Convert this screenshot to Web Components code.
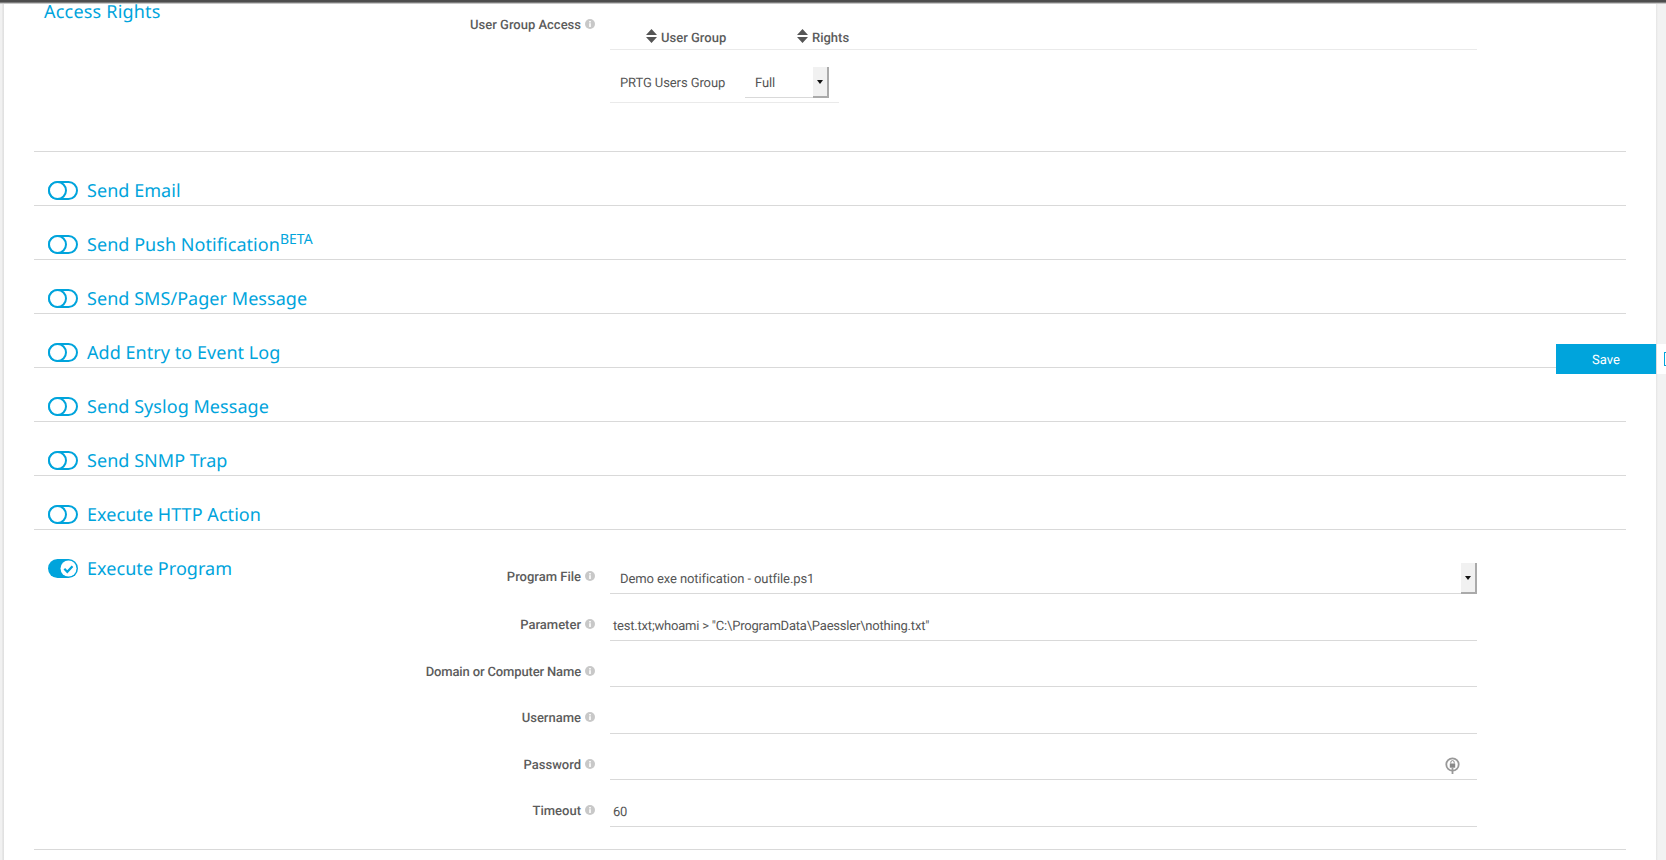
<!DOCTYPE html>
<html>
<head>
<meta charset="utf-8">
<title>Notification settings</title>
<style>
    html, body { margin: 0; height: 100%; background: #fff; overflow: hidden; }
</style>
</head>
<body>
<prtg-app>
    <prtg-section label="Access Rights" kind="plain" height="148">
        <prtg-field label="User Group Access" height="auto">
            <prtg-rights></prtg-rights>
        </prtg-field>
    </prtg-section>
    <prtg-section label="Send Email"></prtg-section>
    <prtg-section label="Send Push Notification" beta></prtg-section>
    <prtg-section label="Send SMS/Pager Message"></prtg-section>
    <prtg-section label="Add Entry to Event Log"></prtg-section>
    <prtg-section label="Send Syslog Message"></prtg-section>
    <prtg-section label="Send SNMP Trap"></prtg-section>
    <prtg-section label="Execute HTTP Action"></prtg-section>
    <prtg-section label="Execute Program" on>
        <prtg-field label="Program File" first><prtg-select value="Demo exe notification - outfile.ps1"></prtg-select></prtg-field>
        <prtg-field label="Parameter"><prtg-input value='test.txt;whoami &gt; "C:\ProgramData\Paessler\nothing.txt"'></prtg-input></prtg-field>
        <prtg-field label="Domain or Computer Name" tight><prtg-input></prtg-input></prtg-field>
        <prtg-field label="Username"><prtg-input></prtg-input></prtg-field>
        <prtg-field label="Password"><prtg-input secret></prtg-input></prtg-field>
        <prtg-field label="Timeout"><prtg-input value="60"></prtg-input></prtg-field>
    </prtg-section>
</prtg-app>

<script>
class PrtgApp extends HTMLElement {
    constructor() {
        super();
        this.attachShadow({ mode: "open" });
        this.shadowRoot.innerHTML = `
        <style>
            :host {
                display: flex;
                flex-direction: column;
                position: relative;
                height: 860px;
                overflow: hidden;
                font-family: Roboto, "Liberation Sans", sans-serif;
                text-rendering: geometricPrecision;
                color: #555;
            }
            .top {
                height: 4px;
                flex: none;
                background: linear-gradient(#4d4d4d 0, #4d4d4d 2px, #aaa 3px, #e4e4e4 4px);
            }
            .frame { display: flex; flex: 1; min-height: 0; }
            .left {
                width: 4px;
                flex: none;
                background: linear-gradient(90deg, #f1f1f1 0, #f1f1f1 2px, #ddd 3px, #e6e6e6 4px);
            }
            main { flex: 1; padding-left: 30px; padding-right: 30px; min-width: 0; }
            .right {
                width: 10px;
                flex: none;
                background: linear-gradient(90deg, #e4e4e4 0, #f2f2f2 2px);
            }
            /* floating save bar, stays over the content */
            .bar {
                position: absolute;
                left: 1556px;
                top: 344px;
                display: flex;
                height: 30px;
            }
            .save {
                width: 100px;
                background: #00a4dc;
                color: #fff;
                font-size: 13px;
                line-height: 33px;
                text-align: center;
            }
            .gap { width: 1px; background: #ddd; }
            .cancel {
                width: 9px;
                background: #fff;
                overflow: hidden;
                position: relative;
            }
            .cancel i {
                position: absolute;
                left: 7px;
                top: 8px;
                width: 8px;
                height: 12px;
                border: 1px solid #00a4dc;
            }
        </style>
        <div class="top"></div>
        <div class="frame">
            <div class="left"></div>
            <main><slot></slot></main>
            <div class="right"></div>
        </div>
        <div class="bar">
            <div class="save">Save</div>
            <div class="gap"></div>
            <div class="cancel"><i></i></div>
        </div>
        `;
    }
}

class PrtgSection extends HTMLElement {
    constructor() {
        super();
        this.attachShadow({ mode: "open" });
    }

    connectedCallback() {
        const label = this.getAttribute("label");
        const plain = this.getAttribute("kind") === "plain";
        const isOn = this.hasAttribute("on");
        const beta = this.hasAttribute("beta") ? "<sup>BETA</sup>" : "";
        const height = this.getAttribute("height");
        const toggle = plain ? "" : `<prtg-toggle ${isOn ? "on" : ""}></prtg-toggle>`;
        this.shadowRoot.innerHTML = `
        <style>
            :host {
                display: flex;
                box-sizing: border-box;
                border-bottom: 1px solid #d9d9d9;
                height: ${height ? height + "px" : "54px"};
            }
            :host([on]) { height: 320px; }
            .head {
                width: 340px;
                flex: none;
                box-sizing: border-box;
                display: flex;
                align-items: flex-start;
                gap: 9px;
                padding-left: 14px;
                padding-top: 27px;
                font: 18px/24px "Noto Sans", "Open Sans", sans-serif;
                letter-spacing: 0.05px;
                color: #00a4dc;
            }
            .head.plain {
                padding-left: 10px;
                padding-top: 0;
                line-height: 16px;
                letter-spacing: 0.2px;
            }
            prtg-toggle { margin-top: 2px; }
            sup { font-size: 14px; line-height: 0; vertical-align: 7px; }
            .body { flex: 1; padding-top: 17.75px; min-width: 0; }
            .plain + .body { padding-top: 0; }
        </style>
        <div class="head ${plain ? "plain" : ""}">${toggle}<span>${label}${beta}</span></div>
        <div class="body"><slot></slot></div>
        `;
    }
}

class PrtgToggle extends HTMLElement {
    constructor() {
        super();
        this.attachShadow({ mode: "open" });
    }

    connectedCallback() {
        const inner = this.hasAttribute("on")
            ? `<rect x="0" y="0" width="30" height="19" rx="9.5" fill="#00a4dc"/>
               <circle cx="20.5" cy="9.5" r="8" fill="#fff"/>
               <path d="M16.3 9.8l3 3 5.200-5.600" fill="none" stroke="#00a4dc" stroke-width="2.2"/>`
            : `<rect x="1" y="1" width="28" height="17" rx="8.5" fill="none" stroke="#00a4dc" stroke-width="2"/>
               <circle cx="9.5" cy="9.5" r="8.5" fill="#fff" stroke="#00a4dc" stroke-width="2"/>`;
        this.shadowRoot.innerHTML = `
        <style>
            :host { display: block; width: 30px; height: 19px; flex: none; }
            svg { display: block; }
        </style>
        <svg width="30" height="19" viewBox="0 0 30 19">${inner}</svg>
        `;
    }
}

class PrtgField extends HTMLElement {
    constructor() {
        super();
        this.attachShadow({ mode: "open" });
    }

    connectedCallback() {
        const auto = this.getAttribute("height") === "auto";
        const top = auto ? "14px" : this.hasAttribute("first") ? "22px" : "24px";
        this.shadowRoot.innerHTML = `
        <style>
            :host {
                display: flex;
                height: ${auto ? "auto" : "46.5px"};
                box-sizing: border-box;
                font-size: 13px;
            }
            .label {
                width: 221px;
                flex: none;
                box-sizing: border-box;
                display: flex;
                justify-content: flex-end;
                gap: 4px;
                padding-top: ${top};
                font-weight: 500;
                line-height: 16px;
                color: #5c5c5c;
                white-space: nowrap;
                letter-spacing: ${this.hasAttribute("tight") ? "-0.14px" : "0"};
            }
            svg { display: block; margin-top: 1px; flex: none; }
            .ctl { flex: none; width: 867px; margin-left: 15px; }
        </style>
        <div class="label"><span>${this.getAttribute("label")}</span>
            <svg width="10" height="10" viewBox="0 0 10 10">
                <circle cx="5" cy="5" r="5" fill="#c8c8c8"/>
                <rect x="4.2" y="4.2" width="1.6" height="3.8" fill="#fff"/>
                <rect x="4.2" y="2" width="1.6" height="1.5" fill="#fff"/>
            </svg>
        </div>
        <div class="ctl"><slot></slot></div>
        `;
    }
}

class PrtgInput extends HTMLElement {
    constructor() {
        super();
        this.attachShadow({ mode: "open" });
    }

    connectedCallback() {
        const lock = this.hasAttribute("secret") ? `
            <svg width="15" height="17" viewBox="0 0 15 17">
                <circle cx="7.500" cy="7.500" r="6.200" fill="none" stroke="#999" stroke-width="1.800"/>
                <rect x="4.800" y="6.500" width="5.400" height="4.200" fill="#888"/>
                <path d="M5.800 6.500V5.300a1.700 1.700 0 0 1 3.400 0V6.500" fill="none" stroke="#888" stroke-width="1"/>
                <rect x="6.600" y="10.500" width="1.800" height="6.500" fill="#999"/>
            </svg>` : "";
        this.shadowRoot.innerHTML = `
        <style>
            :host {
                display: flex;
                align-items: center;
                justify-content: space-between;
                box-sizing: border-box;
                height: 46.5px;
                padding: 18px 17px 0 3px;
                border-bottom: 1px solid #d9d9d9;
                font-size: 13px;
                letter-spacing: -0.2px;
                color: #555;
                white-space: nowrap;
            }
            svg { display: block; }
        </style>
        <span>${(this.getAttribute("value") || "").replace(/&/g, "&amp;").replace(/</g, "&lt;")}</span>${lock}
        `;
    }
}

class PrtgSelect extends HTMLElement {
    constructor() {
        super();
        this.attachShadow({ mode: "open" });
    }

    connectedCallback() {
        const compact = this.hasAttribute("compact");
        this.shadowRoot.innerHTML = `
        <style>
            :host {
                display: flex;
                align-items: stretch;
                box-sizing: border-box;
                height: ${compact ? "31px" : "46.5px"};
                padding-top: ${compact ? "0" : "15px"};
                font-size: 13px;
                letter-spacing: -0.1px;
                color: #555;
            }
            .val {
                flex: 1;
                border-bottom: 1px solid #d9d9d9;
                padding-left: 10px;
                line-height: ${compact ? "33px" : "34px"};
                white-space: nowrap;
            }
            .btn {
                width: 16px;
                box-sizing: border-box;
                background: #f1f1f1;
                border-right: 2px solid #aaa;
                border-bottom: 2px solid #aaa;
                display: flex;
                align-items: center;
                justify-content: center;
            }
            .btn i {
                width: 0;
                height: 0;
                border-left: 3.5px solid transparent;
                border-right: 3.5px solid transparent;
                border-top: 4px solid #111;
            }
        </style>
        <div class="val">${this.getAttribute("value")}</div>
        <div class="btn"><i></i></div>
        `;
    }
}

class PrtgSortHead extends HTMLElement {
    constructor() {
        super();
        this.attachShadow({ mode: "open" });
    }

    connectedCallback() {
        this.shadowRoot.innerHTML = `
        <style>
            :host {
                display: flex;
                align-items: center;
                gap: 4px;
                font-size: 13px;
                font-weight: 500;
                color: #5c5c5c;
                white-space: nowrap;
            }
            svg { display: block; margin-top: -5px; }
        </style>
        <svg width="11" height="14" viewBox="0 0 11 14">
            <path d="M5.500 0L11 6H0zM0 8h11l-5.500 6z" fill="#555"/>
        </svg>
        <span><slot></slot></span>
        `;
    }
}

class PrtgRights extends HTMLElement {
    constructor() {
        super();
        this.attachShadow({ mode: "open" });
        this.shadowRoot.innerHTML = `
        <style>
            :host { display: block; font-size: 13px; color: #555; }
            .head {
                display: flex;
                align-items: flex-end;
                height: 46px;
                box-sizing: border-box;
                padding: 0 0 3px 36px;
                border-bottom: 1px solid #eaeaea;
            }
            prtg-sort-head:first-child { width: 151px; }
            .row {
                display: flex;
                align-items: center;
                width: 229px;
                height: 53px;
                box-sizing: border-box;
                padding-left: 10px;
                border-bottom: 1px solid #eaeaea;
            }
            .name {
                width: 125px;
                flex: none;
                white-space: nowrap;
                padding-top: 15px;
                letter-spacing: -0.1px;
            }
            prtg-select { width: 84px; margin-top: 13px; flex: none; }
        </style>
        <div class="head">
            <prtg-sort-head>User Group</prtg-sort-head>
            <prtg-sort-head>Rights</prtg-sort-head>
        </div>
        <div class="row">
            <div class="name">PRTG Users Group</div>
            <prtg-select compact value="Full"></prtg-select>
        </div>
        `;
    }
}

customElements.define("prtg-app", PrtgApp);
customElements.define("prtg-section", PrtgSection);
customElements.define("prtg-toggle", PrtgToggle);
customElements.define("prtg-field", PrtgField);
customElements.define("prtg-input", PrtgInput);
customElements.define("prtg-select", PrtgSelect);
customElements.define("prtg-sort-head", PrtgSortHead);
customElements.define("prtg-rights", PrtgRights);
</script>
</body>
</html>
